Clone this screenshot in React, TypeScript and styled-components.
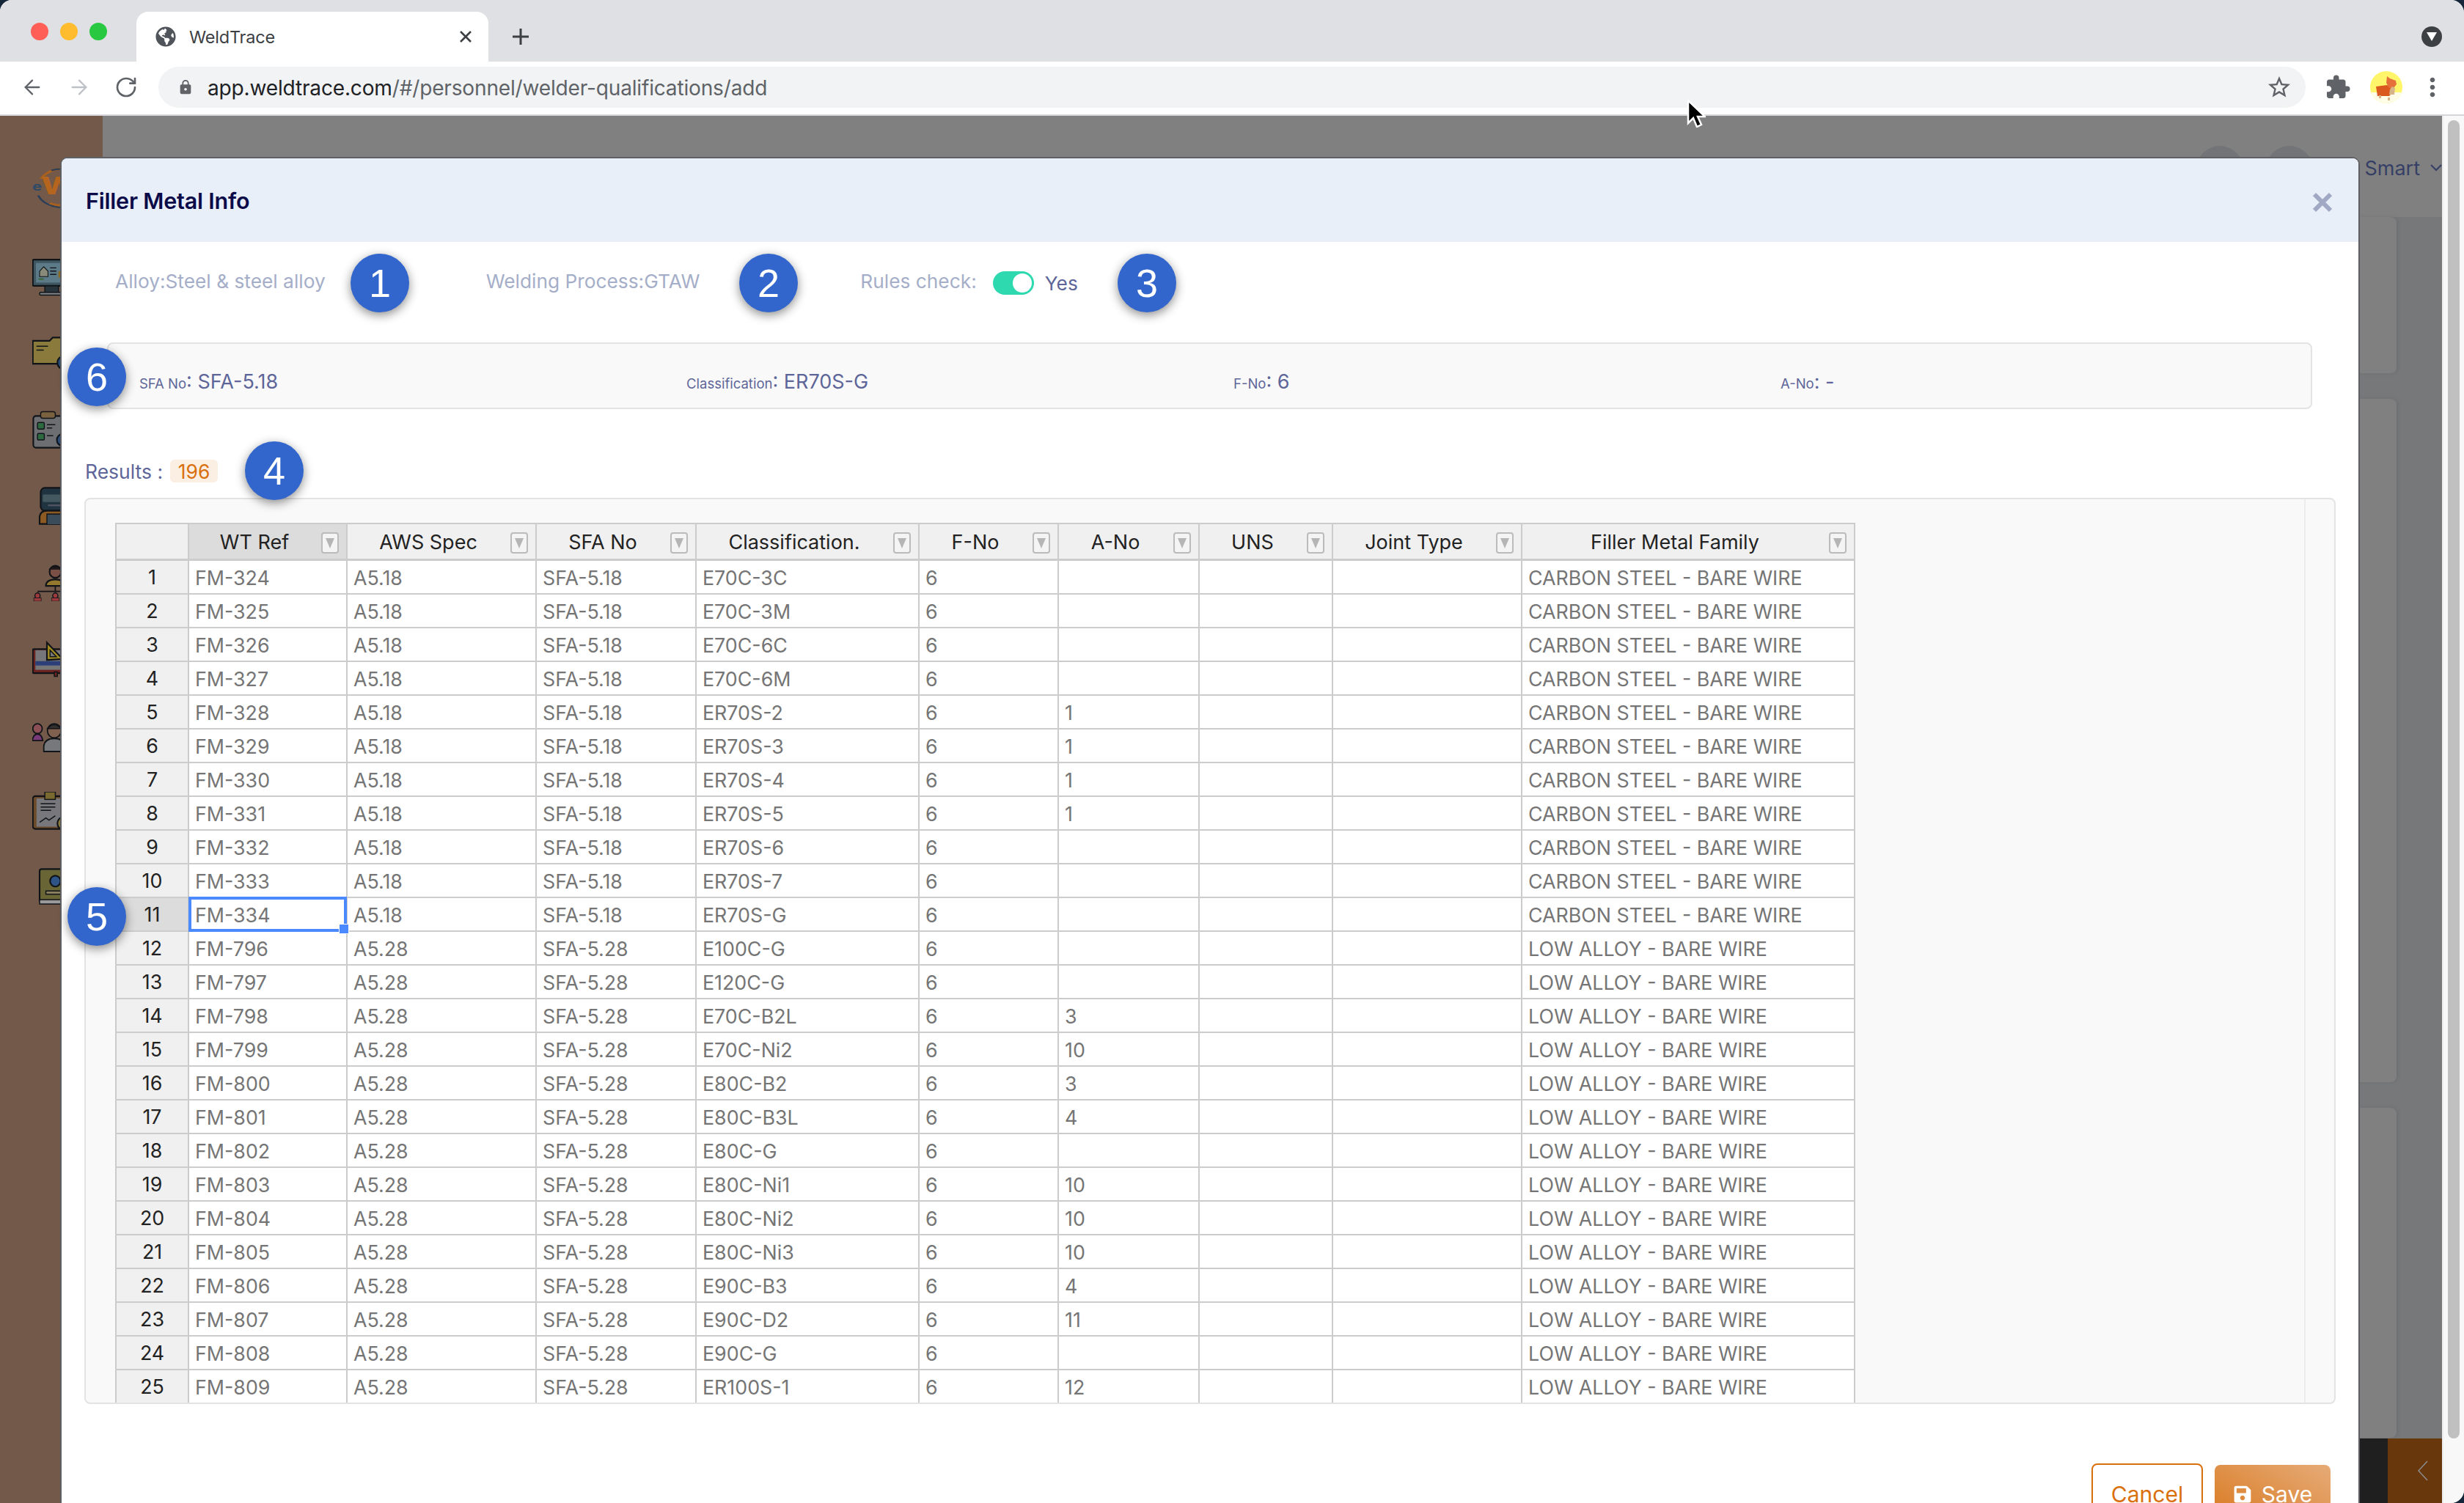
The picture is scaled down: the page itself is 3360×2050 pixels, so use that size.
import React from 'react';
import styled, { createGlobalStyle } from 'styled-components';
import { ArrowLeft, ArrowRight, RotateCw } from 'lucide-react';
import { FaGlobeAmericas, FaSave } from 'react-icons/fa';
import { MdExtension, MdLock, MdMoreVert, MdStarBorder } from 'react-icons/md';

const FONT = `Inter, "Liberation Sans", sans-serif`;

const Global = createGlobalStyle`
  html, body { margin: 0; padding: 0; background: #15263a; }
  body { width: 3360px; height: 2050px; overflow: hidden; font-family: ${FONT}; }
  * { box-sizing: border-box; }
`;

const Win = styled.div`
  position: relative; width: 3360px; height: 2050px; display: flex; flex-direction: column;
  overflow: hidden; border-radius: 16px 18px 18px 0; background: #fff;
`;
const TabStrip = styled.div`
  height: 84px; flex: none; background: #dfe0e4; display: flex; align-items: flex-end; padding-left: 186px; position: relative;
`;
const Lights = styled.div`
  position: absolute; left: 42px; top: 31px; display: flex; gap: 16px;
`;
const Light = styled.span<{ $c: string }>`
  width: 24px; height: 24px; border-radius: 50%; background: ${p => p.$c};
`;
const Tab = styled.div`
  width: 480px; height: 68px; background: #fff; border-radius: 16px 16px 0 0; display: flex; align-items: center;
  padding: 0 22px 0 26px; color: #3c4043; font-size: 23.5px; gap: 18px;
`;
const TabTitle = styled.span`flex: 1; letter-spacing: -0.2px;`;
const NewTab = styled.div`
  margin: 0 0 10px 32px; width: 24px; height: 48px; display: flex; align-items: center; justify-content: center; color: #3c4043;
`;
const StripMenu = styled.div`
  position: absolute; right: 30px; top: 36px; width: 28px; height: 28px; border-radius: 50%; background: #3c4043;
  display: flex; align-items: center; justify-content: center;
`;
const Toolbar = styled.div`
  height: 74px; flex: none; background: #fff; border-bottom: 2px solid #d5d5da; display: flex; align-items: center;
  padding: 0 0 2px 28px; color: #5f6368;
`;
const NavBtn = styled.div<{ $dim?: boolean }>`
  width: 32px; height: 32px; margin-right: 32px; display: flex; align-items: center; justify-content: center;
  color: ${p => (p.$dim ? '#bdc1c6' : '#5f6368')};
`;
const Omni = styled.div`
  width: 2928px; height: 56px; margin-left: -4px; border-radius: 28px; background: #f1f3f4; display: flex; align-items: center;
  padding: 0 18px 0 26px; font-size: 28.1px; color: #5f6368; gap: 19px;
`;
const Url = styled.div`flex: 1; letter-spacing: -0.2px; padding-top: 2px;`;
const UrlHost = styled.span`color: #202124;`;
const ToolIcons = styled.div`display: flex; align-items: center; margin-left: 26px;`;
const Avatar = styled.div`
  width: 44px; height: 44px; border-radius: 50%; margin: 0 21px 0 26px; overflow: hidden; flex: none;
`;

const PageArea = styled.div`flex: 1; display: flex; position: relative; min-height: 0;`;
const Sidebar = styled.div`
  width: 140px; flex: none; background: #72594a; padding: 66px 0 0 40px; display: flex; flex-direction: column; gap: 52px;
`;
const SideLogo = styled.svg`width: 90px; height: 64px; margin-bottom: 12px; flex: none;`;
const SideIcon = styled.svg`width: 60px; height: 52px; flex: none; margin-left: 4px;`;
const Content = styled.div`flex: 1; display: flex; flex-direction: column; background: #77787a; min-width: 0;`;
const TopBar = styled.div`
  height: 138px; flex: none; background: #808080; display: flex; align-items: center; justify-content: flex-end;
  padding: 8px 0 0; color: #363f66; font-size: 27px;
`;
const TopCircle = styled.div`width: 64px; height: 64px; border-radius: 50%; background: #727477; margin-right: 31px;`;
const SmartName = styled.div`display: flex; align-items: center; gap: 14px; margin-left: 39px; margin-top: -4px;`;
const Cards = styled.div`flex: 1; display: flex; flex-direction: column; gap: 35px; padding-right: 62px; min-height: 0;`;
const BackCard = styled.div<{ $h: number }>`
  height: ${p => p.$h}px; flex: none; background: #808080; border-radius: 0 8px 8px 0; box-shadow: 2px 0 6px rgba(0,0,0,.08);
`;
const BottomBar = styled.div`height: 88px; flex: none; background: #1f1f1f; display: flex; justify-content: flex-end;`;
const BottomToggle = styled.div`
  width: 74px; background: #68370c; display: flex; align-items: center; justify-content: flex-end; padding-right: 18px;
`;
const Scroll = styled.div`
  width: 30px; flex: none; background: #f8f8f8; border-left: 2px solid #ececec; padding: 6px 6px 88px 6px;
`;
const Thumb = styled.div`height: 100%; width: 16px; background: #c0c0c0; border-radius: 8px;`;

const Modal = styled.div`
  position: absolute; left: 84px; top: 58px; width: 3132px; background: #fff; border-radius: 8px 8px 0 0;
  box-shadow: 0 -2px 0 #5f6063, 2px 0 0 #5f6063, -2px 0 0 #5f6063; display: flex; flex-direction: column;
`;
const ModalHead = styled.div`
  height: 114px; background: #e9eff9; border-radius: 8px 8px 0 0; display: flex; align-items: center; justify-content: space-between;
  padding: 0 36px 0 33px;
`;
const ModalTitle = styled.h1`margin: 0; font-size: 30.5px; font-weight: 600; color: #0b0b4a; letter-spacing: -0.2px;`;
const CloseBtn = styled.svg`width: 26px; height: 28px; margin-top: 6px;`;
const MetaRow = styled.div`
  height: 137px; padding: 39px 0 0 73px; display: flex; align-items: flex-start; gap: 219px; font-size: 26.3px; color: #a5aec8;
`;
const MetaItem = styled.div`line-height: 30px; display: flex; align-items: flex-start; white-space: nowrap;`;
const Toggle = styled.div`
  width: 56px; height: 32px; border-radius: 16px; background: #2fd9b0; margin: 1px 15px 0 22px; display: flex; align-items: center;
  justify-content: flex-end; padding-right: 3px;
`;
const Knob = styled.div`width: 26px; height: 26px; border-radius: 50%; background: #fff;`;
const Yes = styled.span`color: #5e6699; margin-top: 3px;`;
const InfoCard = styled.div`
  margin: 0 63px 0 62px; height: 91px; background: #f9f9f9; border: 2px solid #e3e3e3; border-radius: 8px;
  display: grid; grid-template-columns: repeat(3, 746px) 1fr; padding: 35px 0 0 42px; color: #5e6699; font-size: 27px;
  line-height: 34px;
`;
const InfoLabel = styled.span`font-size: 18.5px;`;
const ResultsRow = styled.div`
  height: 121px; padding: 69px 0 0 32px; display: flex; align-items: flex-start; gap: 10px; font-size: 26.5px; color: #5e6699;
  line-height: 32px;
`;
const Count = styled.span`
  background: #fbeee3; color: #d9700d; border-radius: 6px; width: 65px; height: 31px; text-align: center; display: block;
`;
const Panel = styled.div`
  margin: 0 31px; height: 1236px; border: 2px solid #e3e3e3; border-radius: 8px; background: #f9f9f9; overflow: hidden;
  display: flex; padding: 32px 0 0 40px;
`;
const TableWrap = styled.div`flex: 1; position: relative; overflow: hidden; min-width: 0;`;
const Track = styled.div`width: 41px; flex: none; border-left: 2px solid #ececec; margin-top: -32px;`;
const Grid = styled.table`
  border-collapse: separate; border-spacing: 0; table-layout: fixed; width: 2373px; font-size: 26.8px;
  border-top: 2px solid #ccc; border-left: 2px solid #ccc;
`;
const Th = styled.th<{ $sel?: boolean }>`
  height: 50px; padding: 2px 36px 0 0; background: ${p => (p.$sel ? '#dcdcdc' : '#f0f0f0')}; font-weight: 400; color: #222;
  border-right: 2px solid #ccc; border-bottom: 3px solid #ccc; position: relative; font-size: 27px;
`;
const Corner = styled(Th)`padding: 0;`;
const FilterBtn = styled.span`
  position: absolute; right: 10px; top: 11px; width: 24px; height: 29px; border: 2px solid #bbb; border-radius: 4px; background: #f4f4f4;
  display: flex; align-items: center; justify-content: center;
`;
const FilterTri = styled.span`
  width: 0; height: 0; border-left: 6px solid transparent; border-right: 6px solid transparent; border-top: 14px solid #b5b5b5;
`;
const RowHead = styled.td<{ $sel?: boolean }>`
  height: 46px; padding: 0; text-align: center; background: ${p => (p.$sel ? '#dcdcdc' : '#f0f0f0')}; color: #222;
  border-right: 2px solid #ccc; border-bottom: 2px solid #ccc;
`;
const Cell = styled.td`
  height: 46px; padding: 1px 0 0 8px; background: #fff; color: #757575; white-space: nowrap; overflow: hidden; position: relative;
  border-right: 2px solid #ccc; border-bottom: 2px solid #ccc;
`;
const Selection = styled.div`
  position: absolute; left: -1px; right: -1px; top: -2px; bottom: -2px; border: 4px solid #4b89ff; pointer-events: none;
`;
const SelectedTd = styled(Cell)`overflow: visible; z-index: 2;`;
const Handle = styled.div`
  position: absolute; right: -7px; bottom: -7px; width: 14px; height: 14px; background: #4b89ff; border: 1px solid #fff;
`;
const Footer = styled.div`
  display: flex; justify-content: flex-end; gap: 16px; padding: 81px 38px 0 0; font-size: 30px;
`;
const CancelBtn = styled.button`
  width: 152px; height: 80px; border: 2px solid #d9700d; border-radius: 8px; background: #fff; color: #d9700d; font: inherit;
  padding: 4px 0 0;
`;
const SaveBtn = styled.button`
  width: 158px; height: 78px; margin-top: 2px; border: none; border-radius: 8px; color: #fff; font: inherit; padding: 2px 0 0;
  background: linear-gradient(30deg, #d97a20, #e6ab78); display: flex; align-items: center; justify-content: center; gap: 13px;
`;
const Bubble = styled.div<{ $x: number; $y: number }>`
  position: absolute; left: ${p => p.$x}px; top: ${p => p.$y}px; width: 80px; height: 80px; border-radius: 50%;
  background: #3366cc; color: #fff; font-size: 54px; display: flex; align-items: center; justify-content: center;
  box-shadow: 0 4px 14px rgba(0,0,0,.45); font-family: "Liberation Sans", sans-serif; z-index: 5;
`;
const Pointer = styled.svg`position: absolute; left: 2300px; top: 136px; width: 26px; height: 38px; z-index: 9;`;

const CARBON = 'CARBON STEEL - BARE WIRE';
const LOW = 'LOW ALLOY - BARE WIRE';
const rows: [string, string, string, string, string, string][] = [
  ['FM-324', 'A5.18', 'SFA-5.18', 'E70C-3C', '', CARBON],
  ['FM-325', 'A5.18', 'SFA-5.18', 'E70C-3M', '', CARBON],
  ['FM-326', 'A5.18', 'SFA-5.18', 'E70C-6C', '', CARBON],
  ['FM-327', 'A5.18', 'SFA-5.18', 'E70C-6M', '', CARBON],
  ['FM-328', 'A5.18', 'SFA-5.18', 'ER70S-2', '1', CARBON],
  ['FM-329', 'A5.18', 'SFA-5.18', 'ER70S-3', '1', CARBON],
  ['FM-330', 'A5.18', 'SFA-5.18', 'ER70S-4', '1', CARBON],
  ['FM-331', 'A5.18', 'SFA-5.18', 'ER70S-5', '1', CARBON],
  ['FM-332', 'A5.18', 'SFA-5.18', 'ER70S-6', '', CARBON],
  ['FM-333', 'A5.18', 'SFA-5.18', 'ER70S-7', '', CARBON],
  ['FM-334', 'A5.18', 'SFA-5.18', 'ER70S-G', '', CARBON],
  ['FM-796', 'A5.28', 'SFA-5.28', 'E100C-G', '', LOW],
  ['FM-797', 'A5.28', 'SFA-5.28', 'E120C-G', '', LOW],
  ['FM-798', 'A5.28', 'SFA-5.28', 'E70C-B2L', '3', LOW],
  ['FM-799', 'A5.28', 'SFA-5.28', 'E70C-Ni2', '10', LOW],
  ['FM-800', 'A5.28', 'SFA-5.28', 'E80C-B2', '3', LOW],
  ['FM-801', 'A5.28', 'SFA-5.28', 'E80C-B3L', '4', LOW],
  ['FM-802', 'A5.28', 'SFA-5.28', 'E80C-G', '', LOW],
  ['FM-803', 'A5.28', 'SFA-5.28', 'E80C-Ni1', '10', LOW],
  ['FM-804', 'A5.28', 'SFA-5.28', 'E80C-Ni2', '10', LOW],
  ['FM-805', 'A5.28', 'SFA-5.28', 'E80C-Ni3', '10', LOW],
  ['FM-806', 'A5.28', 'SFA-5.28', 'E90C-B3', '4', LOW],
  ['FM-807', 'A5.28', 'SFA-5.28', 'E90C-D2', '11', LOW],
  ['FM-808', 'A5.28', 'SFA-5.28', 'E90C-G', '', LOW],
  ['FM-809', 'A5.28', 'SFA-5.28', 'ER100S-1', '12', LOW],
];
const headers: [string, number][] = [
  ['WT Ref', 216], ['AWS Spec', 258], ['SFA No', 218], ['Classification.', 304], ['F-No', 190],
  ['A-No', 192], ['UNS', 182], ['Joint Type', 258], ['Filler Metal Family', 454],
];

const K = '#101418';
const icons: React.ReactNode[] = [
  <g key="a"><rect x="1" y="3" width="76" height="48" rx="2" fill="#3f5560" stroke={K} strokeWidth="3" /><rect x="7" y="9" width="64" height="36" fill="#5c7a88" /><path d="M14 24l8-8 8 8v10H14z" fill="#8a8a7a" stroke={K} strokeWidth="1.5" /><path d="M34 18h12M34 24h12M34 30h12" stroke={K} strokeWidth="2" /><rect x="12" y="37" width="10" height="3" fill="#3d6a3d" /><rect x="50" y="24" width="4" height="12" fill="#8a6a20" /><rect x="56" y="18" width="4" height="18" fill="#8a3b2a" /><rect x="24" y="51" width="26" height="12" fill="#28343c" stroke={K} strokeWidth="2" /><rect x="14" y="63" width="46" height="5" rx="2" fill="#7c8084" stroke={K} strokeWidth="2" /></g>,
  <g key="b"><path d="M1 12h32l6-6h30v48H1z" fill="#8a7a3c" stroke={K} strokeWidth="3" /><path d="M8 22h22M8 29h14" stroke={K} strokeWidth="2" /><circle cx="60" cy="52" r="12" fill="#2a4d7a" stroke={K} strokeWidth="3" /></g>,
  <g key="c"><rect x="2" y="10" width="60" height="58" rx="5" fill="#6d6e72" stroke={K} strokeWidth="3" /><rect x="16" y="2" width="28" height="12" rx="4" fill="#7a6240" stroke={K} strokeWidth="2" /><rect x="10" y="22" width="13" height="12" rx="2" fill="#2e6a3f" stroke={K} strokeWidth="2" /><rect x="10" y="42" width="13" height="12" rx="2" fill="#2e6a3f" stroke={K} strokeWidth="2" /><path d="M28 26h16M28 32h10M28 46h12" stroke={K} strokeWidth="2" /><circle cx="58" cy="54" r="11" fill="#2a4d7a" stroke={K} strokeWidth="3" /></g>,
  <g key="d"><rect x="16" y="2" width="50" height="42" rx="8" fill="#1f3440" stroke={K} strokeWidth="3" /><rect x="20" y="14" width="44" height="14" rx="2" fill="#44585f" /><path d="M30 34h24" stroke="#556" strokeWidth="3" /><path d="M14 68V54q2-10 14-10h36v24z" fill="#8c5a22" stroke={K} strokeWidth="3" /><rect x="28" y="50" width="34" height="20" fill="#3a4b5a" stroke={K} strokeWidth="2" /></g>,
  <g key="e"><circle cx="44" cy="16" r="11" fill="#7a4f45" stroke={K} strokeWidth="3" /><path d="M32 12q12-12 24 0" fill="#221a1a" stroke={K} strokeWidth="2" /><path d="M26 42q0-12 18-12t18 12z" fill="#94782e" stroke={K} strokeWidth="3" /><path d="M44 42v10M10 52h68" fill="none" stroke={K} strokeWidth="2.5" /><circle cx="10" cy="60" r="5" fill="#9b3b3e" stroke={K} strokeWidth="2" /><rect x="3" y="64" width="14" height="6" fill="#9b3b3e" stroke={K} /><circle cx="44" cy="60" r="5" fill="#9b3b3e" stroke={K} strokeWidth="2" /><rect x="37" y="64" width="14" height="6" fill="#9b3b3e" stroke={K} /></g>,
  <g key="f"><rect x="1" y="18" width="76" height="44" rx="2" fill="#6a2320" stroke={K} strokeWidth="3" /><rect x="6" y="20" width="70" height="36" fill="#77777a" /><rect x="6" y="40" width="70" height="8" fill="#2d3f78" /><path d="M28 38V6l30 30z" fill="#a08c20" stroke={K} strokeWidth="3" /><path d="M34 32V20l12 12z" fill="#77777a" stroke={K} strokeWidth="2" /><rect x="42" y="60" width="6" height="8" fill="#6a2320" stroke={K} strokeWidth="2" /></g>,
  <g key="g"><circle cx="10" cy="24" r="9" fill="#8c4f55" stroke={K} strokeWidth="2.5" /><path d="M0 46q2-12 10-12t10 12z" fill="#7a3a7a" stroke={K} strokeWidth="2.5" /><circle cx="42" cy="28" r="13" fill="#80604f" stroke={K} strokeWidth="2.5" /><path d="M29 24q13-14 26 0z" fill="#33302e" stroke={K} strokeWidth="2" /><path d="M22 66v-10q2-14 20-14t20 14v10z" fill="#77787c" stroke={K} strokeWidth="2.5" /></g>,
  <g key="h"><rect x="1" y="8" width="70" height="60" rx="5" fill="#6d4a28" stroke={K} strokeWidth="3" /><rect x="8" y="12" width="56" height="52" fill="#77777c" /><rect x="24" y="0" width="20" height="14" fill="#7a6a30" stroke={K} strokeWidth="2" /><path d="M16 22h28M16 28h28M16 34h20M14 56l12-8 6 4 12-8" fill="none" stroke={K} strokeWidth="2" /><circle cx="60" cy="58" r="12" fill="#8a7a3c" stroke={K} strokeWidth="3" /></g>,
  <g key="i"><rect x="14" y="2" width="60" height="62" rx="4" fill="#6a6534" stroke={K} strokeWidth="3" /><circle cx="44" cy="24" r="10" fill="#2e5487" stroke={K} strokeWidth="3" /><rect x="26" y="42" width="36" height="6" fill="#8a8060" stroke={K} strokeWidth="2" /><rect x="14" y="58" width="60" height="8" fill="#9a9a9a" stroke={K} strokeWidth="2" /></g>,
];

const Chevron: React.FC = () => (
  <svg width="16" height="10" viewBox="0 0 16 10"><path d="M1 1l7 7 7-7" fill="none" stroke="#363f66" strokeWidth="2.2" /></svg>
);

export default function App() {
  return (
    <>
      <Global />
      <Win>
        <TabStrip>
          <Lights>
            <Light $c="#ff5f57" /><Light $c="#febc2e" /><Light $c="#28c840" />
          </Lights>
          <Tab>
            <FaGlobeAmericas size={28} color="#50555b" />
            <TabTitle>WeldTrace</TabTitle>
            <svg width="18" height="18" viewBox="0 0 18 18"><path d="M2 2l14 14M16 2L2 16" stroke="#3c4043" strokeWidth="2.6" /></svg>
          </Tab>
          <NewTab>
            <svg width="24" height="24" viewBox="0 0 24 24"><path d="M12 1v22M1 12h22" stroke="#3c4043" strokeWidth="3" /></svg>
          </NewTab>
          <StripMenu>
            <svg width="14" height="12" viewBox="0 0 14 12"><path d="M0 0h14L7 12z" fill="#fff" /></svg>
          </StripMenu>
        </TabStrip>
        <Toolbar>
          <NavBtn><ArrowLeft size={38} strokeWidth={1.7} /></NavBtn>
          <NavBtn $dim><ArrowRight size={38} strokeWidth={1.7} /></NavBtn>
          <NavBtn><RotateCw size={32} strokeWidth={2} /></NavBtn>
          <Omni>
            <MdLock size={22} color="#5f6368" />
            <Url><UrlHost>app.weldtrace.com</UrlHost>/#/personnel/welder-qualifications/add</Url>
            <MdStarBorder size={36} color="#5f6368" />
          </Omni>
          <ToolIcons>
            <MdExtension size={36} color="#5f6368" />
            <Avatar>
              <svg width="44" height="44" viewBox="0 0 44 44">
                <rect width="44" height="44" fill="#fff56a" />
                <rect y="29" width="44" height="15" fill="#fdfde8" />
                <path d="M8 21l15-2 5 3 2 8-4 4H10z" fill="#d9591e" />
                <path d="M22 16l1-9 4 3 8 3 1 5-4 5h-6z" fill="#e5703a" />
                <path d="M26 32h7l1-9-4-2-3 4zM24 36h3v4h-3zM12 33h3v4h-3z" fill="#d8b48a" />
              </svg>
            </Avatar>
            <MdMoreVert size={40} color="#5f6368" />
          </ToolIcons>
        </Toolbar>
        <PageArea>
          <Sidebar>
            <SideLogo viewBox="0 0 90 90" preserveAspectRatio="none">
              <path d="M16 28A36 36 0 0 1 60 10" fill="none" stroke="#a8601f" strokeWidth="4" />
              <path d="M30 12A36 36 0 0 1 70 20" fill="none" stroke="#2b3f58" strokeWidth="3" />
              <path d="M12 60A36 36 0 0 0 60 80" fill="none" stroke="#2b3f58" strokeWidth="3" />
              <path d="M28 75A36 36 0 0 0 66 72" fill="none" stroke="#a8601f" strokeWidth="4" />
              <text x="4" y="50" fontSize="22" fontWeight="700" fontFamily="Inter" fill="#2f4a66">e</text>
              <text x="16" y="58" fontSize="46" fontWeight="800" fontFamily="Inter" fill="#b5651d">W</text>
            </SideLogo>
            {icons.map((ic, i) => <SideIcon key={i} viewBox="0 0 84 70" preserveAspectRatio="none">{ic}</SideIcon>)}
          </Sidebar>
          <Content>
            <TopBar>
              <TopCircle /><TopCircle />
              <SmartName>Smart<Chevron /></SmartName>
            </TopBar>
            <Cards>
              <BackCard $h={213} />
              <BackCard $h={932} />
              <BackCard $h={450} />
            </Cards>
            <BottomBar>
              <BottomToggle>
                <svg width="16" height="28" viewBox="0 0 16 28"><path d="M14 1L2 14l12 13" fill="none" stroke="#8c8c8c" strokeWidth="1.5" /></svg>
              </BottomToggle>
            </BottomBar>
          </Content>
          <Scroll><Thumb /></Scroll>
          <Modal>
            <ModalHead>
              <ModalTitle>Filler Metal Info</ModalTitle>
              <CloseBtn viewBox="0 0 26 28"><path d="M2 3l22 22M24 3L2 25" stroke="#a1a8c3" strokeWidth="6" /></CloseBtn>
            </ModalHead>
            <MetaRow>
              <MetaItem>Alloy:Steel &amp; steel alloy</MetaItem>
              <MetaItem>Welding Process:GTAW</MetaItem>
              <MetaItem>Rules check:<Toggle><Knob /></Toggle><Yes>Yes</Yes></MetaItem>
            </MetaRow>
            <InfoCard>
              <div><InfoLabel>SFA No</InfoLabel>: SFA-5.18</div>
              <div><InfoLabel>Classification</InfoLabel>: ER70S-G</div>
              <div><InfoLabel>F-No</InfoLabel>: 6</div>
              <div><InfoLabel>A-No</InfoLabel>: -</div>
            </InfoCard>
            <ResultsRow>Results : <Count>196</Count></ResultsRow>
            <Panel>
              <TableWrap>
                <Grid>
                  <colgroup>
                    <col width={99} />
                    {headers.map(([h, w]) => <col key={h} width={w} />)}
                  </colgroup>
                  <thead>
                    <tr>
                      <Corner />
                      {headers.map(([h], i) => (
                        <Th key={h} $sel={i === 0}>{h}<FilterBtn><FilterTri /></FilterBtn></Th>
                      ))}
                    </tr>
                  </thead>
                  <tbody>
                    {rows.map((r, i) => (
                      <tr key={r[0]}>
                        <RowHead $sel={i === 10}>{i + 1}</RowHead>
                        {i === 10
                          ? <SelectedTd>{r[0]}<Selection><Handle /></Selection></SelectedTd>
                          : <Cell>{r[0]}</Cell>}
                        <Cell>{r[1]}</Cell>
                        <Cell>{r[2]}</Cell>
                        <Cell>{r[3]}</Cell>
                        <Cell>6</Cell>
                        <Cell>{r[4]}</Cell>
                        <Cell />
                        <Cell />
                        <Cell>{r[5]}</Cell>
                      </tr>
                    ))}
                  </tbody>
                </Grid>
              </TableWrap>
              <Track />
            </Panel>
            <Footer>
              <CancelBtn>Cancel</CancelBtn>
              <SaveBtn><FaSave size={26} />Save</SaveBtn>
            </Footer>
            <Bubble $x={394} $y={130}>1</Bubble>
            <Bubble $x={924} $y={130}>2</Bubble>
            <Bubble $x={1440} $y={130}>3</Bubble>
            <Bubble $x={8} $y={258}>6</Bubble>
            <Bubble $x={250} $y={386}>4</Bubble>
            <Bubble $x={8} $y={994}>5</Bubble>
          </Modal>
        </PageArea>
        <Pointer viewBox="0 0 26 38">
          <path d="M2 1v31l7-7 5 12 6-3-5-11h10z" fill="#000" stroke="#fff" strokeWidth="2.5" />
        </Pointer>
      </Win>
    </>
  );
}
